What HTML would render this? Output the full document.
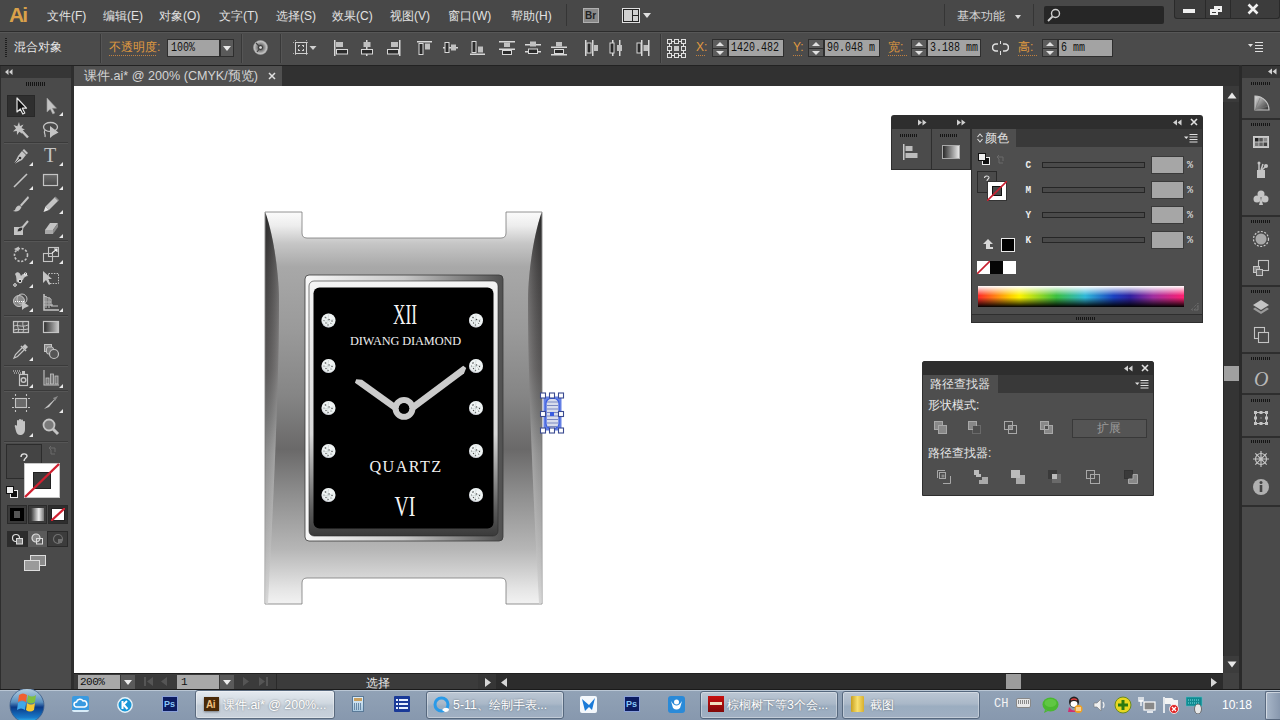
<!DOCTYPE html>
<html><head><meta charset="utf-8">
<style>
*{margin:0;padding:0;box-sizing:border-box}
html,body{width:1280px;height:720px;overflow:hidden;background:#474747;font-family:"Liberation Sans",sans-serif;font-size:12px;color:#d8d8d8}
.a{position:absolute}
.t{position:absolute;white-space:nowrap;line-height:1}
</style></head><body>
<!-- MENU BAR -->
<div class="a" id="menubar" style="left:0;top:0;width:1280px;height:31px;background:#484848"></div>
<div class="a" style="left:0;top:31px;width:1280px;height:1px;background:#2c2c2c"></div>

<!-- menubar content -->
<div class="t" style="left:9px;top:4px;font-size:21px;font-weight:bold;color:#d9a14a;letter-spacing:-1.8px">Ai</div>
<div class="t" style="left:47px;top:10px;color:#e2e2e2">文件(F)</div>
<div class="t" style="left:103px;top:10px;color:#e2e2e2">编辑(E)</div>
<div class="t" style="left:159px;top:10px;color:#e2e2e2">对象(O)</div>
<div class="t" style="left:219px;top:10px;color:#e2e2e2">文字(T)</div>
<div class="t" style="left:276px;top:10px;color:#e2e2e2">选择(S)</div>
<div class="t" style="left:332px;top:10px;color:#e2e2e2">效果(C)</div>
<div class="t" style="left:390px;top:10px;color:#e2e2e2">视图(V)</div>
<div class="t" style="left:448px;top:10px;color:#e2e2e2">窗口(W)</div>
<div class="t" style="left:511px;top:10px;color:#e2e2e2">帮助(H)</div>
<div class="a" style="left:566px;top:4px;width:1px;height:22px;background:#353535"></div>
<div class="a" style="left:583px;top:8px;width:16px;height:15px;background:#8a8a8a;border:1px solid #b0b0b0"></div>
<div class="t" style="left:585px;top:11px;font-size:10px;color:#222;font-weight:bold">Br</div>
<div class="a" style="left:622px;top:8px;width:18px;height:15px;border:1px solid #e0e0e0;background:#222"></div>
<div class="a" style="left:624px;top:10px;width:8px;height:11px;background:#cfcfcf"></div>
<div class="a" style="left:633px;top:10px;width:5px;height:5px;background:#cfcfcf"></div>
<div class="a" style="left:633px;top:16px;width:5px;height:5px;background:#cfcfcf"></div>
<div class="a" style="left:643px;top:13px;width:0;height:0;border-left:4px solid transparent;border-right:4px solid transparent;border-top:5px solid #e0e0e0"></div>
<div class="a" style="left:944px;top:4px;width:1px;height:22px;background:#353535"></div>
<div class="t" style="left:957px;top:10px;color:#d8d8d8">基本功能</div>
<div class="a" style="left:1015px;top:15px;width:0;height:0;border-left:3px solid transparent;border-right:3px solid transparent;border-top:4px solid #d8d8d8"></div>
<div class="a" style="left:1033px;top:4px;width:1px;height:22px;background:#353535"></div>
<div class="a" style="left:1044px;top:6px;width:120px;height:18px;background:#262626;border-radius:2px"></div>
<svg class="a" style="left:1046px;top:7px" width="16" height="16" viewBox="0 0 16 16"><circle cx="9.5" cy="6.5" r="4" fill="none" stroke="#cfcfcf" stroke-width="1.4"/><line x1="6.5" y1="9.5" x2="2" y2="14" stroke="#cfcfcf" stroke-width="1.8"/></svg>
<div class="a" style="left:1174px;top:0;width:106px;height:19px;background:#3c3c3c;border:1px solid #2a2a2a;border-top:none;border-radius:0 0 3px 3px"></div>
<div class="a" style="left:1205px;top:0;width:1px;height:19px;background:#2a2a2a"></div>
<div class="a" style="left:1230px;top:0;width:1px;height:19px;background:#2a2a2a"></div>
<div class="a" style="left:1183px;top:9px;width:12px;height:4px;background:#f0f0f0"></div>
<div class="a" style="left:1214px;top:6px;width:8px;height:6px;border:2px solid #f0f0f0;border-top-width:3px"></div>
<div class="a" style="left:1210px;top:9px;width:8px;height:6px;border:2px solid #f0f0f0;border-top-width:3px;background:#3c3c3c"></div>
<svg class="a" style="left:1247px;top:3px" width="12" height="12" viewBox="0 0 12 12"><path d="M1.5 1.5L10.5 10.5M10.5 1.5L1.5 10.5" stroke="#f0f0f0" stroke-width="2.6"/></svg>
<!-- CONTROL BAR -->
<div class="a" id="ctrl" style="left:0;top:32px;width:1280px;height:33px;background:#4b4b4b;border-top:1px solid #575757"></div>

<!-- control bar content -->
<div class="a" style="left:5px;top:38px;width:2px;height:20px;background:repeating-linear-gradient(#1e1e1e 0 1px,#4b4b4b 1px 2px)"></div>
<div class="t" style="left:14px;top:41px;color:#e8e8e8">混合对象</div>
<div class="a" style="left:100px;top:34px;width:1px;height:29px;background:#383838"></div><div class="a" style="left:101px;top:34px;width:1px;height:29px;background:#555"></div>
<div class="t" style="left:109px;top:41px;color:#e09a40">不透明度:</div>
<div class="a" style="left:109px;top:55px;width:48px;height:1px;background:repeating-linear-gradient(90deg,#c08040 0 1px,transparent 1px 2px)"></div>
<div class="a" style="left:167px;top:39px;width:53px;height:18px;background:#a3a3a3;border:1px solid #2e2e2e"></div>
<div class="t" style="left:171px;top:42px;color:#111;font-family:'Liberation Mono',monospace;font-size:10px;transform:scaleY(1.25);transform-origin:0 0">100%</div>
<div class="a" style="left:220px;top:39px;width:14px;height:18px;background:#5a5a5a;border:1px solid #2e2e2e"></div>
<div class="a" style="left:223px;top:46px;width:0;height:0;border-left:4px solid transparent;border-right:4px solid transparent;border-top:5px solid #e8e8e8"></div>
<div class="a" style="left:241px;top:34px;width:1px;height:29px;background:#383838"></div><div class="a" style="left:242px;top:34px;width:1px;height:29px;background:#555"></div>
<svg class="a" style="left:253px;top:40px" width="15" height="15" viewBox="0 0 15 15"><defs><radialGradient id="gl" cx="0.5" cy="0.5" r="0.5"><stop offset="0" stop-color="#e8e8e8"/><stop offset="0.25" stop-color="#303030"/><stop offset="0.45" stop-color="#7a7a7a"/><stop offset="1" stop-color="#d8d8d8"/></radialGradient></defs><circle cx="7.5" cy="7.5" r="7" fill="url(#gl)" stroke="#999" stroke-width="0.6"/><path d="M7.5 7.5L3 3M7.5 7.5L4 12" stroke="#444" stroke-width="1.2"/><circle cx="7.5" cy="7.5" r="1.3" fill="#ddd"/></svg>
<div class="a" style="left:280px;top:34px;width:1px;height:29px;background:#383838"></div><div class="a" style="left:281px;top:34px;width:1px;height:29px;background:#555"></div>
<svg class="a" style="left:292px;top:39px" width="26" height="18" viewBox="0 0 26 18"><rect x="3.5" y="3.5" width="11" height="11" fill="none" stroke="#d0d0d0"/><path d="M1 3.5H3M15 3.5H17M1 14.5H3M15 14.5H17M3.5 1V3M14.5 1V3M3.5 15V17M14.5 15V17" stroke="#aaa" stroke-width="1" stroke-dasharray="1 1"/><path d="M6 6.5h2M10 6.5h2M6 11.5h2M10 11.5h2M6.5 6v2M6.5 10v2M11.5 6v2M11.5 10v2" stroke="#d0d0d0"/><path d="M17.5 7h7l-3.5 4z" fill="#d0d0d0"/></svg>
<svg class="a" style="left:333px;top:40px" width="16" height="16" viewBox="0 0 16 16"><rect x="1" y="0" width="1.5" height="16" fill="#d8d8d8"/><rect x="3" y="2" width="7" height="5" fill="#c0c0c0"/><rect x="3.5" y="9.5" width="11" height="4.5" fill="#2a2a2a" stroke="#d8d8d8" stroke-width="1"/></svg>
<svg class="a" style="left:359px;top:40px" width="16" height="16" viewBox="0 0 16 16"><rect x="7" y="0" width="1.5" height="16" fill="#d8d8d8"/><rect x="4.5" y="2" width="7" height="5" fill="#c0c0c0"/><rect x="2.5" y="9.5" width="11" height="4.5" fill="#2a2a2a" stroke="#d8d8d8"/></svg>
<svg class="a" style="left:386px;top:40px" width="16" height="16" viewBox="0 0 16 16"><rect x="13" y="0" width="1.5" height="16" fill="#d8d8d8"/><rect x="5" y="2" width="7" height="5" fill="#c0c0c0"/><rect x="1.5" y="9.5" width="11" height="4.5" fill="#2a2a2a" stroke="#d8d8d8"/></svg>
<svg class="a" style="left:417px;top:40px" width="16" height="16" viewBox="0 0 16 16"><rect x="0" y="1" width="15" height="1.5" fill="#d8d8d8"/><rect x="2" y="3.5" width="4" height="11" fill="#2a2a2a" stroke="#d8d8d8"/><rect x="8" y="3.5" width="5" height="6" fill="#c0c0c0"/></svg>
<svg class="a" style="left:443px;top:40px" width="16" height="16" viewBox="0 0 16 16"><rect x="0" y="7" width="15" height="1.5" fill="#d8d8d8"/><rect x="2" y="2.5" width="4" height="10" fill="#2a2a2a" stroke="#d8d8d8"/><rect x="8" y="4.5" width="5" height="6" fill="#c0c0c0"/></svg>
<svg class="a" style="left:470px;top:40px" width="16" height="16" viewBox="0 0 16 16"><rect x="0" y="13.5" width="15" height="1.5" fill="#d8d8d8"/><rect x="2" y="1.5" width="4" height="11" fill="#2a2a2a" stroke="#d8d8d8"/><rect x="8" y="6.5" width="5" height="6" fill="#c0c0c0"/></svg>
<svg class="a" style="left:499px;top:40px" width="16" height="16" viewBox="0 0 16 16"><rect x="0" y="1" width="16" height="1.5" fill="#d8d8d8"/><rect x="0" y="8.5" width="16" height="1.5" fill="#d8d8d8"/><rect x="5" y="2.5" width="6" height="4.5" fill="#c0c0c0"/><rect x="3.5" y="10.5" width="9" height="4" fill="#2a2a2a" stroke="#d8d8d8"/></svg>
<svg class="a" style="left:525px;top:40px" width="16" height="16" viewBox="0 0 16 16"><rect x="0" y="4" width="16" height="1.5" fill="#d8d8d8"/><rect x="0" y="11" width="16" height="1.5" fill="#d8d8d8"/><rect x="5" y="1.5" width="6" height="5" fill="#c0c0c0"/><rect x="3.5" y="9" width="9" height="4.5" fill="#2a2a2a" stroke="#d8d8d8"/></svg>
<svg class="a" style="left:551px;top:40px" width="16" height="16" viewBox="0 0 16 16"><rect x="0" y="6.5" width="16" height="1.5" fill="#d8d8d8"/><rect x="0" y="14" width="16" height="1.5" fill="#d8d8d8"/><rect x="5" y="2" width="6" height="4.5" fill="#c0c0c0"/><rect x="3.5" y="9.5" width="9" height="4" fill="#2a2a2a" stroke="#d8d8d8"/></svg>
<svg class="a" style="left:584px;top:40px" width="16" height="16" viewBox="0 0 16 16"><rect x="1" y="0" width="1.5" height="16" fill="#d8d8d8"/><rect x="8" y="0" width="1.5" height="16" fill="#d8d8d8"/><rect x="3" y="3" width="4" height="10" fill="#2a2a2a" stroke="#d8d8d8"/><rect x="10" y="5" width="4" height="6" fill="#c0c0c0"/></svg>
<svg class="a" style="left:609px;top:40px" width="16" height="16" viewBox="0 0 16 16"><rect x="3" y="0" width="1.5" height="16" fill="#d8d8d8"/><rect x="10" y="0" width="1.5" height="16" fill="#d8d8d8"/><rect x="1" y="3" width="4" height="10" fill="#2a2a2a" stroke="#d8d8d8"/><rect x="8" y="5" width="5" height="6" fill="#c0c0c0"/></svg>
<svg class="a" style="left:635px;top:40px" width="16" height="16" viewBox="0 0 16 16"><rect x="6" y="0" width="1.5" height="16" fill="#d8d8d8"/><rect x="13" y="0" width="1.5" height="16" fill="#d8d8d8"/><rect x="2" y="3" width="4" height="10" fill="#2a2a2a" stroke="#d8d8d8"/><rect x="8.5" y="5" width="4.5" height="6" fill="#c0c0c0"/></svg>

<div class="a" style="left:660px;top:34px;width:1px;height:29px;background:#383838"></div><div class="a" style="left:661px;top:34px;width:1px;height:29px;background:#555"></div>
<svg class="a" style="left:667px;top:39px" width="19" height="19" viewBox="0 0 19 19" fill="none" stroke="#e0e0e0" stroke-width="1"><rect x="0.5" y="0.5" width="4" height="4"/><rect x="7.5" y="0.5" width="4" height="4"/><rect x="14.5" y="0.5" width="4" height="4"/><rect x="0.5" y="7.5" width="4" height="4"/><rect x="7" y="7" width="5" height="5" fill="#c8c8c8" stroke="none"/><rect x="14.5" y="7.5" width="4" height="4"/><rect x="0.5" y="14.5" width="4" height="4"/><rect x="7.5" y="14.5" width="4" height="4"/><rect x="14.5" y="14.5" width="4" height="4"/><path d="M4.5 2.5h3M11.5 2.5h3M4.5 16.5h3M11.5 16.5h3M2.5 4.5v3M2.5 11.5v3M16.5 4.5v3M16.5 11.5v3"/></svg>
<div class="t" style="left:696px;top:41px;color:#e09a40;font-size:12px">X:</div>
<div class="a" style="left:696px;top:55px;width:10px;height:1px;background:repeating-linear-gradient(90deg,#c08040 0 1px,transparent 1px 2px)"></div>
<div class="a" style="left:712px;top:39px;width:16px;height:18px;background:#5c5c5c;border:1px solid #2e2e2e"></div>
<div class="a" style="left:716px;top:42px;width:0;height:0;border-left:4px solid transparent;border-right:4px solid transparent;border-bottom:4px solid #e0e0e0"></div>
<div class="a" style="left:713px;top:48px;width:14px;height:1px;background:#2e2e2e"></div>
<div class="a" style="left:716px;top:51px;width:0;height:0;border-left:4px solid transparent;border-right:4px solid transparent;border-top:4px solid #e0e0e0"></div>
<div class="a" style="left:728px;top:39px;width:56px;height:18px;background:#a3a3a3;border:1px solid #2e2e2e;overflow:hidden"></div>
<div class="t" style="left:731px;top:42px;color:#111;font-family:'Liberation Mono',monospace;font-size:10px;transform:scaleY(1.25);transform-origin:0 0">1420.482</div>
<div class="t" style="left:793px;top:41px;color:#e09a40;font-size:12px">Y:</div>
<div class="a" style="left:793px;top:55px;width:10px;height:1px;background:repeating-linear-gradient(90deg,#c08040 0 1px,transparent 1px 2px)"></div>
<div class="a" style="left:808px;top:39px;width:16px;height:18px;background:#5c5c5c;border:1px solid #2e2e2e"></div>
<div class="a" style="left:812px;top:42px;width:0;height:0;border-left:4px solid transparent;border-right:4px solid transparent;border-bottom:4px solid #e0e0e0"></div>
<div class="a" style="left:809px;top:48px;width:14px;height:1px;background:#2e2e2e"></div>
<div class="a" style="left:812px;top:51px;width:0;height:0;border-left:4px solid transparent;border-right:4px solid transparent;border-top:4px solid #e0e0e0"></div>
<div class="a" style="left:824px;top:39px;width:56px;height:18px;background:#a3a3a3;border:1px solid #2e2e2e;overflow:hidden"></div>
<div class="t" style="left:827px;top:42px;color:#111;font-family:'Liberation Mono',monospace;font-size:10px;transform:scaleY(1.25);transform-origin:0 0">90.048 m</div>
<div class="t" style="left:888px;top:41px;color:#e09a40;font-size:12px">宽:</div>
<div class="a" style="left:888px;top:55px;width:20px;height:1px;background:repeating-linear-gradient(90deg,#c08040 0 1px,transparent 1px 2px)"></div>
<div class="a" style="left:911px;top:39px;width:16px;height:18px;background:#5c5c5c;border:1px solid #2e2e2e"></div>
<div class="a" style="left:915px;top:42px;width:0;height:0;border-left:4px solid transparent;border-right:4px solid transparent;border-bottom:4px solid #e0e0e0"></div>
<div class="a" style="left:912px;top:48px;width:14px;height:1px;background:#2e2e2e"></div>
<div class="a" style="left:915px;top:51px;width:0;height:0;border-left:4px solid transparent;border-right:4px solid transparent;border-top:4px solid #e0e0e0"></div>
<div class="a" style="left:927px;top:39px;width:54px;height:18px;background:#a3a3a3;border:1px solid #2e2e2e;overflow:hidden"></div>
<div class="t" style="left:930px;top:42px;color:#111;font-family:'Liberation Mono',monospace;font-size:10px;transform:scaleY(1.25);transform-origin:0 0">3.188 mm</div>
<svg class="a" style="left:992px;top:41px" width="17" height="14" viewBox="0 0 17 14" fill="none" stroke="#e0e0e0" stroke-width="1.6"><path d="M6 3H4a3.5 3.5 0 0 0 0 7h2M11 3h2a3.5 3.5 0 0 1 0 7h-2"/><path d="M8.5 0v3M8.5 10v4" stroke-width="1"/></svg>
<div class="t" style="left:1018px;top:41px;color:#e09a40;font-size:12px">高:</div>
<div class="a" style="left:1018px;top:55px;width:20px;height:1px;background:repeating-linear-gradient(90deg,#c08040 0 1px,transparent 1px 2px)"></div>
<div class="a" style="left:1042px;top:39px;width:16px;height:18px;background:#5c5c5c;border:1px solid #2e2e2e"></div>
<div class="a" style="left:1046px;top:42px;width:0;height:0;border-left:4px solid transparent;border-right:4px solid transparent;border-bottom:4px solid #e0e0e0"></div>
<div class="a" style="left:1043px;top:48px;width:14px;height:1px;background:#2e2e2e"></div>
<div class="a" style="left:1046px;top:51px;width:0;height:0;border-left:4px solid transparent;border-right:4px solid transparent;border-top:4px solid #e0e0e0"></div>
<div class="a" style="left:1058px;top:39px;width:55px;height:18px;background:#a3a3a3;border:1px solid #2e2e2e;overflow:hidden"></div>
<div class="t" style="left:1061px;top:42px;color:#111;font-family:'Liberation Mono',monospace;font-size:10px;transform:scaleY(1.25);transform-origin:0 0">6 mm</div>
<svg class="a" style="left:1248px;top:41px" width="16" height="12" viewBox="0 0 16 12"><path d="M0 3h5l-2.5 3z" fill="#e0e0e0"/><path d="M7 1.5h8M7 4.5h8M7 7.5h8M7 10.5h8" stroke="#e0e0e0" stroke-width="1.2"/></svg>
<!-- TAB BAR -->
<div class="a" style="left:72px;top:65px;width:1170px;height:21px;background:#313131"></div>
<div class="a" style="left:74px;top:66px;width:208px;height:20px;background:#505050"></div>
<!-- LEFT TOOLBAR -->
<div class="a" style="left:0;top:65px;width:74px;height:625px;background:#2e2e2e"></div>
<div class="a" style="left:1px;top:66px;width:70px;height:12px;background:#363636"></div>
<div class="a" style="left:1px;top:78px;width:70px;height:611px;background:#4a4a4a"></div>
<!-- CANVAS -->
<div class="a" style="left:74px;top:86px;width:1149px;height:587px;background:#ffffff"></div>
<!-- V SCROLL -->
<div class="a" style="left:1223px;top:86px;width:17px;height:587px;background:#343434;border-left:1px solid #262626"></div>
<!-- RIGHT DOCK -->
<div class="a" style="left:1240px;top:65px;width:2px;height:625px;background:#2a2a2a"></div>
<div class="a" style="left:1242px;top:66px;width:38px;height:12px;background:#363636"></div>
<div class="a" style="left:1242px;top:78px;width:38px;height:612px;background:#4a4a4a"></div>

<div class="t" style="left:84px;top:70px;color:#d4d4d4;font-size:12.6px">课件.ai* @ 200% (CMYK/预览)</div>
<svg class="a" style="left:268px;top:72px" width="8" height="8" viewBox="0 0 8 8"><path d="M1 1L7 7M7 1L1 7" stroke="#e0e0e0" stroke-width="1.5"/></svg>
<svg class="a" style="left:5px;top:69px" width="8" height="6" viewBox="0 0 8 6"><path d="M3.5 0L0 3L3.5 6ZM7.5 0L4 3L7.5 6Z" fill="#d0d0d0"/></svg>
<svg class="a" style="left:1268px;top:68px" width="9" height="7" viewBox="0 0 9 7"><path d="M4 0.5L0 3.5L4 6.5ZM8.5 0.5L4.5 3.5L8.5 6.5Z" fill="#d0d0d0"/></svg>
<div class="a" style="left:26px;top:82px;width:20px;height:4px;background:repeating-linear-gradient(90deg,#151515 0 1px,transparent 1px 2px)"></div>
<div class="a" style="left:0;top:65px;width:1280px;height:1px;background:#222"></div>
<!-- STATUS BAR -->
<div class="a" style="left:74px;top:673px;width:1149px;height:17px;background:#2c2c2c"></div>
<!-- TASKBAR -->
<div class="a" style="left:0;top:690px;width:1280px;height:30px;background:#8596ad"></div>
<!-- TOOLS -->
<div class="a" style="left:7px;top:95px;width:28px;height:22px;background:#2f2f2f;border:1px solid #282828"></div>
<div class="a" style="left:4px;top:142px;width:64px;height:1px;background:#3a3a3a"></div>
<div class="a" style="left:4px;top:143px;width:64px;height:1px;background:#565656"></div>
<div class="a" style="left:4px;top:240px;width:64px;height:1px;background:#3a3a3a"></div>
<div class="a" style="left:4px;top:241px;width:64px;height:1px;background:#565656"></div>
<div class="a" style="left:4px;top:315px;width:64px;height:1px;background:#3a3a3a"></div>
<div class="a" style="left:4px;top:316px;width:64px;height:1px;background:#565656"></div>
<div class="a" style="left:4px;top:365px;width:64px;height:1px;background:#3a3a3a"></div>
<div class="a" style="left:4px;top:366px;width:64px;height:1px;background:#565656"></div>
<div class="a" style="left:4px;top:390px;width:64px;height:1px;background:#3a3a3a"></div>
<div class="a" style="left:4px;top:391px;width:64px;height:1px;background:#565656"></div>
<div class="a" style="left:4px;top:441px;width:64px;height:1px;background:#3a3a3a"></div>
<div class="a" style="left:4px;top:442px;width:64px;height:1px;background:#565656"></div>
<svg class="a" style="left:11px;top:96px" width="20" height="20" viewBox="0 0 20 20"><path d="M6 2V16L9.3 13L11.8 18L13.8 17L11.3 12.2H15.5Z" fill="#111" stroke="#e6e6e6" stroke-width="1.2" stroke-linejoin="round"/></svg>
<svg class="a" style="left:41px;top:96px" width="20" height="20" viewBox="0 0 20 20"><path d="M6 2V16L9.3 13L11.8 18L13.8 17L11.3 12.2H15.5Z" fill="#c4c4c4" stroke="#9a9a9a" stroke-width="0.6"/></svg>
<svg class="a" style="left:59px;top:112px" width="4" height="4" viewBox="0 0 4 4"><path d="M4 0V4H0z" fill="#e8e8e8"/></svg>
<svg class="a" style="left:11px;top:120px" width="20" height="20" viewBox="0 0 20 20"><path d="M8 2L9 6L12.5 4.5L10.5 8L14 9.5L10.3 10.5L11.5 14L8.3 11.7L6 15L5.8 11L2 11.5L5 8.5L2.5 5L6.3 6.2Z" fill="#c4c4c4"/><path d="M10 10L17 17.5" stroke="#c4c4c4" stroke-width="2.4"/></svg>
<svg class="a" style="left:41px;top:120px" width="20" height="20" viewBox="0 0 20 20"><ellipse cx="9.5" cy="7" rx="7" ry="4.5" fill="none" stroke="#c4c4c4" stroke-width="1.3"/><path d="M4 10C2 13 5 14 4 17" fill="none" stroke="#c4c4c4" stroke-width="1.2"/><path d="M9 6V18L12 15.5L17.5 12.5Z" fill="#c4c4c4"/></svg>
<svg class="a" style="left:11px;top:146px" width="20" height="20" viewBox="0 0 20 20"><path d="M13 3L17 7L15.5 8.5L11.5 4.5Z" fill="#c4c4c4"/><path d="M11 5L15 9L11 14L3 18L7 10Z" fill="#c4c4c4"/><circle cx="9" cy="12" r="1.3" fill="#333"/><path d="M3 18L9 12" stroke="#333" stroke-width="0.8"/></svg>
<svg class="a" style="left:29px;top:162px" width="4" height="4" viewBox="0 0 4 4"><path d="M4 0V4H0z" fill="#e8e8e8"/></svg>
<div class="t" style="left:44px;top:145px;font-family:'Liberation Serif',serif;font-size:20px;color:#c4c4c4">T</div>
<svg class="a" style="left:59px;top:162px" width="4" height="4" viewBox="0 0 4 4"><path d="M4 0V4H0z" fill="#e8e8e8"/></svg>
<svg class="a" style="left:11px;top:170px" width="20" height="20" viewBox="0 0 20 20"><path d="M3 17L16 4" stroke="#c4c4c4" stroke-width="1.6"/></svg>
<svg class="a" style="left:29px;top:186px" width="4" height="4" viewBox="0 0 4 4"><path d="M4 0V4H0z" fill="#e8e8e8"/></svg>
<svg class="a" style="left:41px;top:170px" width="20" height="20" viewBox="0 0 20 20"><defs><linearGradient id="rg" x1="0" y1="0" x2="0" y2="1"><stop offset="0" stop-color="#6a6a6a"/><stop offset="1" stop-color="#4a4a4a"/></linearGradient></defs><rect x="2.5" y="4.5" width="14" height="11" fill="url(#rg)" stroke="#c4c4c4" stroke-width="1.2"/></svg>
<svg class="a" style="left:59px;top:186px" width="4" height="4" viewBox="0 0 4 4"><path d="M4 0V4H0z" fill="#e8e8e8"/></svg>
<svg class="a" style="left:11px;top:194px" width="20" height="20" viewBox="0 0 20 20"><path d="M17 2L9 11L10.5 12.5L18 4Z" fill="#c4c4c4"/><path d="M8.5 11.5C6 11.5 5 13 4 16L2 17C5 18 9 17.5 10.5 13Z" fill="#c4c4c4"/></svg>
<svg class="a" style="left:41px;top:194px" width="20" height="20" viewBox="0 0 20 20"><path d="M14 3L17.5 6.5L8 16L4.5 12.5Z" fill="#c4c4c4"/><path d="M4.5 12.5L8 16L2.5 18Z" fill="#e8e8e8"/><path d="M14 3L17.5 6.5" stroke="#888" stroke-width="1.5"/></svg>
<svg class="a" style="left:59px;top:210px" width="4" height="4" viewBox="0 0 4 4"><path d="M4 0V4H0z" fill="#e8e8e8"/></svg>
<svg class="a" style="left:11px;top:218px" width="20" height="20" viewBox="0 0 20 20"><path d="M3 9H9L9 12H12V17H3Z" fill="#c4c4c4"/><path d="M17 3L11 10" stroke="#c4c4c4" stroke-width="2"/><path d="M11 9C8 9 6 11 6 14C9 14 11 13 12 11Z" fill="#333" stroke="#c4c4c4" stroke-width="1"/></svg>
<svg class="a" style="left:41px;top:218px" width="20" height="20" viewBox="0 0 20 20"><path d="M9 5H17L12 12H4Z" fill="#c4c4c4"/><path d="M4 12H12V16H4Z" fill="#a8a8a8"/><path d="M12 12L17 5V9L12 16Z" fill="#8a8a8a"/></svg>
<svg class="a" style="left:59px;top:234px" width="4" height="4" viewBox="0 0 4 4"><path d="M4 0V4H0z" fill="#e8e8e8"/></svg>
<svg class="a" style="left:11px;top:244px" width="20" height="20" viewBox="0 0 20 20"><circle cx="10" cy="11" r="6.5" fill="none" stroke="#c4c4c4" stroke-width="1.6" stroke-dasharray="2.2 1.6"/><path d="M3 5L8 2.5L7.5 7.5Z" fill="#c4c4c4"/></svg>
<svg class="a" style="left:29px;top:260px" width="4" height="4" viewBox="0 0 4 4"><path d="M4 0V4H0z" fill="#e8e8e8"/></svg>
<svg class="a" style="left:41px;top:244px" width="20" height="20" viewBox="0 0 20 20"><rect x="2.5" y="9.5" width="9" height="8" fill="none" stroke="#c4c4c4" stroke-width="1.1"/><rect x="7.5" y="3.5" width="10" height="9" fill="none" stroke="#c4c4c4" stroke-width="1.1"/><path d="M11 9L16 5M13 5H16V8" fill="none" stroke="#eee" stroke-width="1.1"/></svg>
<svg class="a" style="left:59px;top:260px" width="4" height="4" viewBox="0 0 4 4"><path d="M4 0V4H0z" fill="#e8e8e8"/></svg>
<svg class="a" style="left:11px;top:268px" width="20" height="20" viewBox="0 0 20 20"><path d="M4 6C6 3 9 4 10 8C12 5 15 5 17 8C15 8 13 9 12 12C10 13 7 12 6 15C5 12 6 9 4 6Z" fill="#c4c4c4"/><circle cx="9" cy="13" r="1.8" fill="#333" stroke="#eee" stroke-width="1"/><circle cx="4" cy="17" r="1.3" fill="none" stroke="#eee" stroke-width="1"/><circle cx="14.5" cy="6" r="1.2" fill="none" stroke="#eee" stroke-width="1"/></svg>
<svg class="a" style="left:29px;top:284px" width="4" height="4" viewBox="0 0 4 4"><path d="M4 0V4H0z" fill="#e8e8e8"/></svg>
<svg class="a" style="left:41px;top:268px" width="20" height="20" viewBox="0 0 20 20"><rect x="7.5" y="5.5" width="10" height="10" fill="none" stroke="#c4c4c4" stroke-dasharray="1.5 1.2"/><path d="M2 3V15L5 12L8 17L9.5 16L7 11H11Z" fill="#c4c4c4"/></svg>
<svg class="a" style="left:11px;top:292px" width="20" height="20" viewBox="0 0 20 20"><circle cx="8" cy="9" r="5.5" fill="#8a8a8a" stroke="#c4c4c4" stroke-width="1"/><circle cx="11" cy="7" r="5" fill="none" stroke="#c4c4c4" stroke-width="1"/><path d="M4 9.5H14" stroke="#fff" stroke-width="1.2" stroke-dasharray="1 1"/><path d="M11 9V18L13.5 16L18 14Z" fill="#c4c4c4"/></svg>
<svg class="a" style="left:29px;top:308px" width="4" height="4" viewBox="0 0 4 4"><path d="M4 0V4H0z" fill="#e8e8e8"/></svg>
<svg class="a" style="left:41px;top:292px" width="20" height="20" viewBox="0 0 20 20"><path d="M3 2V18H18" fill="none" stroke="#c4c4c4" stroke-width="1.5"/><path d="M3 4L10 7V14H17" fill="none" stroke="#c4c4c4"/><path d="M5 4V16M8 5V16M3 10H10M3 13H12" stroke="#c4c4c4" stroke-width="1"/><rect x="4" y="5" width="5" height="9" fill="#9a9a9a" opacity="0.6"/></svg>
<svg class="a" style="left:59px;top:308px" width="4" height="4" viewBox="0 0 4 4"><path d="M4 0V4H0z" fill="#e8e8e8"/></svg>
<svg class="a" style="left:11px;top:317px" width="20" height="20" viewBox="0 0 20 20"><rect x="2.5" y="4.5" width="15" height="11" fill="#555" stroke="#c4c4c4" stroke-width="1.2"/><path d="M3 9C7 7 10 11 17 8M3 13C8 11 11 14 17 12M7 5C5 9 9 12 7 15M12 5C11 9 14 11 12 15" fill="none" stroke="#c4c4c4" stroke-width="1"/></svg>
<svg class="a" style="left:41px;top:317px" width="20" height="20" viewBox="0 0 20 20"><defs><linearGradient id="gg" x1="0" x2="1"><stop offset="0" stop-color="#2a2a2a"/><stop offset="1" stop-color="#c8c8c8"/></linearGradient></defs><rect x="2.5" y="4.5" width="15" height="11" fill="url(#gg)" stroke="#c4c4c4" stroke-width="1.2"/></svg>
<svg class="a" style="left:11px;top:341px" width="20" height="20" viewBox="0 0 20 20"><path d="M14 3L17 6L14.5 8.5L11.5 5.5Z" fill="#c4c4c4"/><path d="M10 5L15 10" stroke="#c4c4c4" stroke-width="1.6"/><path d="M11 7L4.5 13.5L3 17L6.5 15.5L13 9" fill="none" stroke="#c4c4c4" stroke-width="1.2"/></svg>
<svg class="a" style="left:29px;top:357px" width="4" height="4" viewBox="0 0 4 4"><path d="M4 0V4H0z" fill="#e8e8e8"/></svg>
<svg class="a" style="left:41px;top:341px" width="20" height="20" viewBox="0 0 20 20"><rect x="3.5" y="3.5" width="7" height="7" fill="#8a8a8a" stroke="#c4c4c4"/><rect x="5.5" y="6" width="7" height="7" rx="2" fill="#7a7a7a" stroke="#c4c4c4"/><circle cx="13" cy="13" r="4.5" fill="#555" stroke="#c4c4c4" stroke-width="1.2"/></svg>
<svg class="a" style="left:11px;top:368px" width="20" height="20" viewBox="0 0 20 20"><path d="M2 3h1M4 3h1M6 3h1M8 3h1M3 5h1M5 5h1M7 5h1M9 5h1" stroke="#ddd" stroke-width="1.2"/><rect x="11" y="3" width="3" height="3" fill="#c4c4c4"/><rect x="8.5" y="6.5" width="8" height="11" fill="#4a4a4a" stroke="#c4c4c4" stroke-width="1.2"/><circle cx="12.5" cy="12" r="2.3" fill="none" stroke="#c4c4c4" stroke-width="1.5"/></svg>
<svg class="a" style="left:29px;top:384px" width="4" height="4" viewBox="0 0 4 4"><path d="M4 0V4H0z" fill="#e8e8e8"/></svg>
<svg class="a" style="left:41px;top:368px" width="20" height="20" viewBox="0 0 20 20"><path d="M3 2V17H18" fill="none" stroke="#c4c4c4" stroke-width="1.1"/><rect x="5" y="10" width="3" height="6" fill="#777" stroke="#c4c4c4" stroke-width="0.8"/><rect x="9.5" y="6" width="3" height="10" fill="#777" stroke="#c4c4c4" stroke-width="0.8"/><rect x="14" y="8" width="3" height="8" fill="#777" stroke="#c4c4c4" stroke-width="0.8"/></svg>
<svg class="a" style="left:59px;top:384px" width="4" height="4" viewBox="0 0 4 4"><path d="M4 0V4H0z" fill="#e8e8e8"/></svg>
<svg class="a" style="left:11px;top:393px" width="20" height="20" viewBox="0 0 20 20"><rect x="4.5" y="5.5" width="11" height="9" fill="#6a6a6a" stroke="#c4c4c4" stroke-width="1.1"/><path d="M1 5.5H3M17 5.5H19M1 14.5H3M17 14.5H19M4.5 1V3M15.5 1V3M4.5 17V19M15.5 17V19" stroke="#c4c4c4" stroke-width="1.1"/></svg>
<svg class="a" style="left:41px;top:393px" width="20" height="20" viewBox="0 0 20 20"><path d="M17 3L3 16L8 14Z" fill="#c4c4c4"/><path d="M17 3L12 5L14 8Z" fill="#8a8a8a"/></svg>
<svg class="a" style="left:59px;top:409px" width="4" height="4" viewBox="0 0 4 4"><path d="M4 0V4H0z" fill="#e8e8e8"/></svg>
<svg class="a" style="left:11px;top:417px" width="20" height="20" viewBox="0 0 20 20"><path d="M4 10C3 8 5 7 6 9V4C6 2.5 8 2.5 8 4V8V3C8 1.5 10 1.5 10 3V8V3.5C10 2 12 2 12 3.5V8.5V5C12 3.7 14 3.7 14 5V12C14 16 12 18 9 18C6 18 5 15 4 10Z" fill="#c4c4c4"/></svg>
<svg class="a" style="left:29px;top:433px" width="4" height="4" viewBox="0 0 4 4"><path d="M4 0V4H0z" fill="#e8e8e8"/></svg>
<svg class="a" style="left:41px;top:417px" width="20" height="20" viewBox="0 0 20 20"><circle cx="8" cy="8" r="5.5" fill="#7a7a7a" stroke="#c4c4c4" stroke-width="1.8"/><path d="M12 12L17 17" stroke="#c4c4c4" stroke-width="3"/></svg>
<div class="a" style="left:6px;top:444px;width:36px;height:35px;background:#444;border:1px solid #2c2c2c"></div>
<svg class="a" style="left:19px;top:453px" width="10" height="12" viewBox="0 0 10 12"><path d="M2 4C2 0 8 0 8 3C8 5 5 5 5 8" fill="none" stroke="#e0e0e0" stroke-width="1.4"/></svg>
<svg class="a" style="left:47px;top:445px" width="12" height="12" viewBox="0 0 12 12"><path d="M2 3H8V7M2 3L4 1M2 3L4 5M8 9H4V5" fill="none" stroke="#6a6a6a" stroke-width="1"/></svg>
<div class="a" style="left:24px;top:463px;width:36px;height:35px;background:#fff;border:1px solid #c8c8c8"></div>
<div class="a" style="left:33px;top:472px;width:18px;height:17px;background:#3a3a3a;border:1px solid #222"></div>
<svg class="a" style="left:24px;top:463px" width="36" height="35" viewBox="0 0 36 35"><path d="M1 34L35 1" stroke="#d02030" stroke-width="2.4"/></svg>
<svg class="a" style="left:6px;top:486px" width="12" height="12" viewBox="0 0 12 12"><rect x="4.5" y="4.5" width="7" height="7" fill="#111" stroke="#eee"/><rect x="0.5" y="0.5" width="7" height="7" fill="#eee" stroke="#111"/></svg>
<div class="a" style="left:7px;top:505px;width:20px;height:19px;background:#3a3a3a;border:1px solid #2a2a2a"></div>
<div class="a" style="left:10px;top:508px;width:14px;height:13px;background:#000"></div>
<div class="a" style="left:14px;top:511px;width:6px;height:7px;background:#555"></div>
<div class="a" style="left:28px;top:505px;width:19px;height:19px;background:#3a3a3a;border:1px solid #2a2a2a"></div>
<div class="a" style="left:31px;top:508px;width:13px;height:13px;background:linear-gradient(90deg,#3a3a3a,#eee 60%,#777)"></div>
<div class="a" style="left:48px;top:505px;width:20px;height:19px;background:#2e2e2e;border:1px solid #2a2a2a"></div>
<svg class="a" style="left:51px;top:508px" width="14" height="13" viewBox="0 0 14 13"><rect x="0.5" y="0.5" width="13" height="12" fill="#fff" stroke="#222"/><path d="M0 13L14 0" stroke="#d02030" stroke-width="2.2"/></svg>
<div class="a" style="left:7px;top:531px;width:61px;height:16px;background:#3c3c3c;border:1px solid #2a2a2a"></div>
<div class="a" style="left:7px;top:531px;width:20px;height:16px;background:#2c2c2c"></div>
<div class="a" style="left:27px;top:531px;width:21px;height:16px;background:#5a5a5a;border-left:1px solid #2a2a2a;border-right:1px solid #2a2a2a"></div>
<svg class="a" style="left:11px;top:533px" width="13" height="12" viewBox="0 0 13 12"><circle cx="5" cy="5" r="3.5" fill="none" stroke="#ddd" stroke-width="1.2"/><rect x="5.5" y="5.5" width="6" height="5.5" fill="#888" stroke="#ddd"/></svg>
<svg class="a" style="left:31px;top:533px" width="13" height="12" viewBox="0 0 13 12"><circle cx="5" cy="5" r="4" fill="#888" stroke="#ddd" stroke-width="1.2"/><rect x="5.5" y="5.5" width="6" height="5.5" fill="none" stroke="#ddd"/></svg>
<svg class="a" style="left:52px;top:533px" width="13" height="12" viewBox="0 0 13 12"><circle cx="6" cy="6" r="4.5" fill="none" stroke="#707070" stroke-width="1.2"/><rect x="6" y="6" width="4" height="4" fill="#707070"/></svg>
<svg class="a" style="left:23px;top:555px" width="24" height="17" viewBox="0 0 24 17"><rect x="7.5" y="0.5" width="15" height="10" fill="#8a8a8a" stroke="#ddd"/><rect x="1.5" y="5.5" width="15" height="10" fill="#9a9a9a" stroke="#ddd"/></svg>

<!-- WATCH -->
<svg class="a" style="left:0;top:0" width="1280" height="720" viewBox="0 0 1280 720">
<defs>
<linearGradient id="cg" x1="0" y1="212" x2="0" y2="604" gradientUnits="userSpaceOnUse">
<stop offset="0" stop-color="#fbfbfb"/>
<stop offset="0.035" stop-color="#ededed"/>
<stop offset="0.08" stop-color="#c6c6c6"/>
<stop offset="0.14" stop-color="#a8a8a8"/>
<stop offset="0.3" stop-color="#9a9a9a"/>
<stop offset="0.47" stop-color="#858585"/>
<stop offset="0.605" stop-color="#6a6969"/>
<stop offset="0.72" stop-color="#8e8e8e"/>
<stop offset="0.86" stop-color="#b6b6b6"/>
<stop offset="0.96" stop-color="#e4e4e4"/>
<stop offset="1" stop-color="#f2f2f2"/>
</linearGradient>
<linearGradient id="crl" x1="0" y1="212" x2="0" y2="604" gradientUnits="userSpaceOnUse">
<stop offset="0" stop-color="#2e2e2e"/>
<stop offset="0.15" stop-color="#4a4848"/>
<stop offset="0.4" stop-color="#646262"/>
<stop offset="0.52" stop-color="#808080"/>
<stop offset="0.62" stop-color="#a0a0a0"/>
<stop offset="0.85" stop-color="#cccccc"/>
<stop offset="1" stop-color="#f4f4f4"/>
</linearGradient>
<linearGradient id="bz1" x1="305" y1="0" x2="503" y2="0" gradientUnits="userSpaceOnUse">
<stop offset="0" stop-color="#f8f8f8"/>
<stop offset="0.5" stop-color="#c8c8c8"/>
<stop offset="1" stop-color="#505050"/>
</linearGradient>
<linearGradient id="bz2" x1="0" y1="275" x2="0" y2="541" gradientUnits="userSpaceOnUse">
<stop offset="0" stop-color="#5a5a5a"/>
<stop offset="0.5" stop-color="#8a8a8a"/>
<stop offset="1" stop-color="#f0f0f0"/>
</linearGradient>
<linearGradient id="bz3" x1="0" y1="281" x2="0" y2="536" gradientUnits="userSpaceOnUse">
<stop offset="0" stop-color="#f4f4f4"/>
<stop offset="0.6" stop-color="#d8d8d8"/>
<stop offset="0.9" stop-color="#5a5a5a"/>
<stop offset="1" stop-color="#3a3a3a"/>
</linearGradient>
<linearGradient id="chl" x1="265" y1="0" x2="280" y2="0" gradientUnits="userSpaceOnUse"><stop offset="0" stop-color="#000" stop-opacity="0.12"/><stop offset="1" stop-color="#fff" stop-opacity="0.22"/></linearGradient>
<linearGradient id="chr" x1="542" y1="0" x2="527" y2="0" gradientUnits="userSpaceOnUse"><stop offset="0" stop-color="#000" stop-opacity="0.12"/><stop offset="1" stop-color="#fff" stop-opacity="0.22"/></linearGradient>
<radialGradient id="dg" cx="0.55" cy="0.4" r="0.6"><stop offset="0" stop-color="#ffffff" stop-opacity="0.9"/><stop offset="0.75" stop-color="#e0e8e8" stop-opacity="0.2"/><stop offset="1" stop-color="#99a" stop-opacity="0.5"/></radialGradient>
</defs>
<path d="M265 212H302V233Q302 238 307 238H501Q506 238 506 233V212H542V604H506V583Q506 578 501 578H307Q302 578 302 583V604H265Z" fill="url(#cg)" stroke="#7a7a7a" stroke-width="0.8"/>
<path d="M265.4 212.5C275 240 279 280 279 300C279 380 274 490 268 603.5H265.4Z" fill="url(#crl)"/>
<path d="M541.6 212.5C532 240 528 280 528 300C528 380 533 490 539 603.5H541.6Z" fill="url(#crl)"/>
<path d="M265.4 212.5C275 240 279 280 279 300C279 380 274 490 268 603.5H265.4Z" fill="url(#chl)"/>
<path d="M541.6 212.5C532 240 528 280 528 300C528 380 533 490 539 603.5H541.6Z" fill="url(#chr)"/>
<rect x="305" y="275" width="198" height="266" rx="4" fill="url(#bz1)" stroke="#3a3a3a" stroke-width="0.8"/>
<rect x="309" y="281" width="189" height="255" rx="5" fill="url(#bz3)" stroke="#2a2a2a" stroke-width="0.6"/>
<rect x="313.5" y="287.5" width="180" height="241" rx="6" fill="#000"/>
<g transform="translate(328.5 320.5)"><circle r="7" fill="#f2f6f6"/><circle r="7" fill="url(#dg)"/><circle cx="-3" cy="-3" r="0.8" fill="#333"/><circle cx="0.5" cy="-1" r="0.8" fill="#444"/><circle cx="3.5" cy="0.5" r="0.7" fill="#444"/><circle cx="-2.5" cy="2.5" r="0.7" fill="#555"/><circle cx="-0.5" cy="4.5" r="0.7" fill="#444"/><circle cx="2.5" cy="3" r="0.6" fill="#666"/><circle cx="-4.5" cy="0" r="0.6" fill="#555"/><path d="M-4 -4L4 4M-5 1L5 -1M0 -6L-1 6" stroke="#b8c4c4" stroke-width="0.5"/></g><g transform="translate(328.5 366)"><circle r="7" fill="#f2f6f6"/><circle r="7" fill="url(#dg)"/><circle cx="-3" cy="-3" r="0.8" fill="#333"/><circle cx="0.5" cy="-1" r="0.8" fill="#444"/><circle cx="3.5" cy="0.5" r="0.7" fill="#444"/><circle cx="-2.5" cy="2.5" r="0.7" fill="#555"/><circle cx="-0.5" cy="4.5" r="0.7" fill="#444"/><circle cx="2.5" cy="3" r="0.6" fill="#666"/><circle cx="-4.5" cy="0" r="0.6" fill="#555"/><path d="M-4 -4L4 4M-5 1L5 -1M0 -6L-1 6" stroke="#b8c4c4" stroke-width="0.5"/></g><g transform="translate(328.5 408)"><circle r="7" fill="#f2f6f6"/><circle r="7" fill="url(#dg)"/><circle cx="-3" cy="-3" r="0.8" fill="#333"/><circle cx="0.5" cy="-1" r="0.8" fill="#444"/><circle cx="3.5" cy="0.5" r="0.7" fill="#444"/><circle cx="-2.5" cy="2.5" r="0.7" fill="#555"/><circle cx="-0.5" cy="4.5" r="0.7" fill="#444"/><circle cx="2.5" cy="3" r="0.6" fill="#666"/><circle cx="-4.5" cy="0" r="0.6" fill="#555"/><path d="M-4 -4L4 4M-5 1L5 -1M0 -6L-1 6" stroke="#b8c4c4" stroke-width="0.5"/></g><g transform="translate(328.5 451)"><circle r="7" fill="#f2f6f6"/><circle r="7" fill="url(#dg)"/><circle cx="-3" cy="-3" r="0.8" fill="#333"/><circle cx="0.5" cy="-1" r="0.8" fill="#444"/><circle cx="3.5" cy="0.5" r="0.7" fill="#444"/><circle cx="-2.5" cy="2.5" r="0.7" fill="#555"/><circle cx="-0.5" cy="4.5" r="0.7" fill="#444"/><circle cx="2.5" cy="3" r="0.6" fill="#666"/><circle cx="-4.5" cy="0" r="0.6" fill="#555"/><path d="M-4 -4L4 4M-5 1L5 -1M0 -6L-1 6" stroke="#b8c4c4" stroke-width="0.5"/></g><g transform="translate(328.5 495)"><circle r="7" fill="#f2f6f6"/><circle r="7" fill="url(#dg)"/><circle cx="-3" cy="-3" r="0.8" fill="#333"/><circle cx="0.5" cy="-1" r="0.8" fill="#444"/><circle cx="3.5" cy="0.5" r="0.7" fill="#444"/><circle cx="-2.5" cy="2.5" r="0.7" fill="#555"/><circle cx="-0.5" cy="4.5" r="0.7" fill="#444"/><circle cx="2.5" cy="3" r="0.6" fill="#666"/><circle cx="-4.5" cy="0" r="0.6" fill="#555"/><path d="M-4 -4L4 4M-5 1L5 -1M0 -6L-1 6" stroke="#b8c4c4" stroke-width="0.5"/></g><g transform="translate(476 320.5)"><circle r="7" fill="#f2f6f6"/><circle r="7" fill="url(#dg)"/><circle cx="-3" cy="-3" r="0.8" fill="#333"/><circle cx="0.5" cy="-1" r="0.8" fill="#444"/><circle cx="3.5" cy="0.5" r="0.7" fill="#444"/><circle cx="-2.5" cy="2.5" r="0.7" fill="#555"/><circle cx="-0.5" cy="4.5" r="0.7" fill="#444"/><circle cx="2.5" cy="3" r="0.6" fill="#666"/><circle cx="-4.5" cy="0" r="0.6" fill="#555"/><path d="M-4 -4L4 4M-5 1L5 -1M0 -6L-1 6" stroke="#b8c4c4" stroke-width="0.5"/></g><g transform="translate(476 366)"><circle r="7" fill="#f2f6f6"/><circle r="7" fill="url(#dg)"/><circle cx="-3" cy="-3" r="0.8" fill="#333"/><circle cx="0.5" cy="-1" r="0.8" fill="#444"/><circle cx="3.5" cy="0.5" r="0.7" fill="#444"/><circle cx="-2.5" cy="2.5" r="0.7" fill="#555"/><circle cx="-0.5" cy="4.5" r="0.7" fill="#444"/><circle cx="2.5" cy="3" r="0.6" fill="#666"/><circle cx="-4.5" cy="0" r="0.6" fill="#555"/><path d="M-4 -4L4 4M-5 1L5 -1M0 -6L-1 6" stroke="#b8c4c4" stroke-width="0.5"/></g><g transform="translate(476 408)"><circle r="7" fill="#f2f6f6"/><circle r="7" fill="url(#dg)"/><circle cx="-3" cy="-3" r="0.8" fill="#333"/><circle cx="0.5" cy="-1" r="0.8" fill="#444"/><circle cx="3.5" cy="0.5" r="0.7" fill="#444"/><circle cx="-2.5" cy="2.5" r="0.7" fill="#555"/><circle cx="-0.5" cy="4.5" r="0.7" fill="#444"/><circle cx="2.5" cy="3" r="0.6" fill="#666"/><circle cx="-4.5" cy="0" r="0.6" fill="#555"/><path d="M-4 -4L4 4M-5 1L5 -1M0 -6L-1 6" stroke="#b8c4c4" stroke-width="0.5"/></g><g transform="translate(476 451)"><circle r="7" fill="#f2f6f6"/><circle r="7" fill="url(#dg)"/><circle cx="-3" cy="-3" r="0.8" fill="#333"/><circle cx="0.5" cy="-1" r="0.8" fill="#444"/><circle cx="3.5" cy="0.5" r="0.7" fill="#444"/><circle cx="-2.5" cy="2.5" r="0.7" fill="#555"/><circle cx="-0.5" cy="4.5" r="0.7" fill="#444"/><circle cx="2.5" cy="3" r="0.6" fill="#666"/><circle cx="-4.5" cy="0" r="0.6" fill="#555"/><path d="M-4 -4L4 4M-5 1L5 -1M0 -6L-1 6" stroke="#b8c4c4" stroke-width="0.5"/></g><g transform="translate(476 495)"><circle r="7" fill="#f2f6f6"/><circle r="7" fill="url(#dg)"/><circle cx="-3" cy="-3" r="0.8" fill="#333"/><circle cx="0.5" cy="-1" r="0.8" fill="#444"/><circle cx="3.5" cy="0.5" r="0.7" fill="#444"/><circle cx="-2.5" cy="2.5" r="0.7" fill="#555"/><circle cx="-0.5" cy="4.5" r="0.7" fill="#444"/><circle cx="2.5" cy="3" r="0.6" fill="#666"/><circle cx="-4.5" cy="0" r="0.6" fill="#555"/><path d="M-4 -4L4 4M-5 1L5 -1M0 -6L-1 6" stroke="#b8c4c4" stroke-width="0.5"/></g>
<text x="405" y="324" text-anchor="middle" font-family="Liberation Serif" font-size="29" fill="#f4f4f4" transform="translate(405 0) scale(0.6 1) translate(-405 0)">XII</text>
<text x="405.5" y="345" text-anchor="middle" font-family="Liberation Serif" font-size="12.3" fill="#f0f0f0" letter-spacing="-0.1">DIWANG DIAMOND</text>
<text x="406" y="472" text-anchor="middle" font-family="Liberation Serif" font-size="16.2" fill="#f0f0f0" letter-spacing="1.4">QUARTZ</text>
<text x="405" y="516.5" text-anchor="middle" font-family="Liberation Serif" font-size="29" fill="#f4f4f4" transform="translate(405 0) scale(0.68 1) translate(-405 0)">VI</text>
<path d="M397.8 405.5 L362.0 379.7 L356.2 379.3 L354.9 382.8 L394.0 410.8Z" fill="#cbcbcb"/><path d="M414.0 410.7 L464.0 373.4 L466.2 368.0 L463.2 365.8 L410.0 405.4Z" fill="#cbcbcb"/><circle cx="404" cy="408.4" r="8.3" fill="none" stroke="#cbcbcb" stroke-width="6.2"/><circle cx="404" cy="408.4" r="5.3" fill="#000"/>
<!-- crown selection -->
<rect x="543.5" y="396.5" width="18" height="34" fill="#4a6ae0" opacity="0.85"/>
<rect x="546" y="398.5" width="13" height="30" rx="5" fill="#d8dcec" stroke="#3a5ce0" stroke-width="1.2"/>
<path d="M547 402H558M547 405.5H558M547 409H558M547 412.5H558M547 416H558M547 419.5H558M547 423H558M547 426.5H558" stroke="#7a88c0" stroke-width="1.2"/>
<rect x="550" y="412" width="4" height="4" fill="#3a5ce0"/>
<g fill="#fff" stroke="#3a4a90" stroke-width="1.1">
<rect x="540.5" y="393" width="5" height="5"/><rect x="549.5" y="393" width="5" height="5"/><rect x="558.5" y="393" width="5" height="5"/>
<rect x="540.5" y="411.5" width="5" height="5"/><rect x="558.5" y="411.5" width="5" height="5"/>
<rect x="540.5" y="428" width="5" height="5"/><rect x="549.5" y="428" width="5" height="5"/><rect x="558.5" y="428" width="5" height="5"/>
</g>
</svg>
<!-- COLOR PANEL -->
<div class="a" style="left:891px;top:115px;width:312px;height:14px;background:#2e2e2e;border-radius:3px 3px 0 0"></div>
<svg class="a" style="left:918px;top:119px" width="9" height="7" viewBox="0 0 9 7"><path d="M0 0.5L4 3.5L0 6.5ZM4.5 0.5L8.5 3.5L4.5 6.5Z" fill="#d0d0d0"/></svg>
<svg class="a" style="left:957px;top:119px" width="9" height="7" viewBox="0 0 9 7"><path d="M0 0.5L4 3.5L0 6.5ZM4.5 0.5L8.5 3.5L4.5 6.5Z" fill="#d0d0d0"/></svg>
<svg class="a" style="left:1173px;top:119px" width="9" height="7" viewBox="0 0 9 7"><path d="M4 0.5L0 3.5L4 6.5ZM8.5 0.5L4.5 3.5L8.5 6.5Z" fill="#d0d0d0"/></svg>
<svg class="a" style="left:1190px;top:118px" width="8" height="8" viewBox="0 0 8 8"><path d="M1 1L7 7M7 1L1 7" stroke="#e0e0e0" stroke-width="1.6"/></svg>
<div class="a" style="left:891px;top:129px;width:80px;height:41px;background:#4b4b4b;border:1px solid #2e2e2e;border-top:none"></div>
<div class="a" style="left:931px;top:129px;width:1px;height:41px;background:#2e2e2e"></div>
<div class="a" style="left:900px;top:134px;width:17px;height:3px;background:repeating-linear-gradient(90deg,#151515 0 1px,transparent 1px 2px)"></div>
<div class="a" style="left:940px;top:134px;width:17px;height:3px;background:repeating-linear-gradient(90deg,#151515 0 1px,transparent 1px 2px)"></div>
<svg class="a" style="left:903px;top:144px" width="16" height="16" viewBox="0 0 16 16"><rect x="0" y="0" width="1.5" height="16" fill="#c8c8c8"/><rect x="2.5" y="2" width="7" height="5" fill="#bdbdbd"/><rect x="2.5" y="9" width="12" height="5" fill="#bdbdbd"/></svg>
<div class="a" style="left:942px;top:145px;width:18px;height:14px;background:linear-gradient(90deg,#2a2a2a,#e8e8e8);border:1px solid #aaa"></div>
<div class="a" style="left:971px;top:129px;width:232px;height:194px;background:#4e4e4e;border:1px solid #2e2e2e;border-top:none"></div>
<div class="a" style="left:972px;top:129px;width:230px;height:18px;background:#393939"></div>
<div class="a" style="left:972px;top:129px;width:44px;height:18px;background:#4e4e4e"></div>
<svg class="a" style="left:977px;top:133px" width="6" height="10" viewBox="0 0 6 10"><path d="M0.5 4L3 1L5.5 4M0.5 6L3 9L5.5 6" fill="none" stroke="#ddd" stroke-width="1.1"/></svg>
<div class="t" style="left:985px;top:132px;color:#e4e4e4;font-size:12px">颜色</div>
<svg class="a" style="left:1184px;top:134px" width="14" height="9" viewBox="0 0 14 9"><path d="M0 2.5h4.5l-2.25 2.5z" fill="#e0e0e0"/><path d="M5.5 0.5h8M5.5 3h8M5.5 5.5h8M5.5 8h8" stroke="#e0e0e0" stroke-width="1"/></svg>
<svg class="a" style="left:978px;top:153px" width="12" height="12" viewBox="0 0 12 12"><rect x="4.5" y="4.5" width="7" height="7" fill="#111" stroke="#eee"/><rect x="0.5" y="0.5" width="7" height="7" fill="#eee" stroke="#111"/></svg>
<svg class="a" style="left:995px;top:154px" width="12" height="12" viewBox="0 0 12 12"><path d="M2 3H8V7M2 3L4 1M2 3L4 5M8 9H4V5" fill="none" stroke="#6a6a6a" stroke-width="1"/></svg>
<div class="a" style="left:977px;top:171px;width:20px;height:22px;border:1px solid #2a2a2a;background:#4a4a4a"></div>
<svg class="a" style="left:983px;top:175px" width="8" height="8" viewBox="0 0 8 8"><path d="M1.5 3C1.5 0.5 6 0.5 6 2.5C6 4 4 4 4 6" fill="none" stroke="#ddd" stroke-width="1.1"/></svg>
<div class="a" style="left:987px;top:181px;width:20px;height:20px;background:#fff;border:1px solid #333"></div>
<div class="a" style="left:992px;top:186px;width:10px;height:10px;background:#4a4a4a;border:1px solid #111"></div>
<svg class="a" style="left:987px;top:181px" width="20" height="20" viewBox="0 0 20 20"><path d="M0 20L20 0" stroke="#c82030" stroke-width="1.6"/></svg>
<div class="t" style="left:1025px;top:160px;color:#f0f0f0;font-family:'Liberation Mono',monospace;font-size:11px;font-weight:bold;transform:scaleX(0.85)">C</div>
<div class="a" style="left:1042px;top:162px;width:103px;height:6px;background:#4a4a4a;border:1px solid #262626"></div>
<div class="a" style="left:1151px;top:156px;width:33px;height:18px;background:#a6a6a6;border:1px solid #3a3a3a"></div>
<div class="t" style="left:1187px;top:161px;color:#e8e8e8;font-family:'Liberation Mono',monospace;font-size:10px">%</div>
<div class="t" style="left:1025px;top:185px;color:#f0f0f0;font-family:'Liberation Mono',monospace;font-size:11px;font-weight:bold;transform:scaleX(0.85)">M</div>
<div class="a" style="left:1042px;top:187px;width:103px;height:6px;background:#4a4a4a;border:1px solid #262626"></div>
<div class="a" style="left:1151px;top:181px;width:33px;height:18px;background:#a6a6a6;border:1px solid #3a3a3a"></div>
<div class="t" style="left:1187px;top:186px;color:#e8e8e8;font-family:'Liberation Mono',monospace;font-size:10px">%</div>
<div class="t" style="left:1025px;top:210px;color:#f0f0f0;font-family:'Liberation Mono',monospace;font-size:11px;font-weight:bold;transform:scaleX(0.85)">Y</div>
<div class="a" style="left:1042px;top:212px;width:103px;height:6px;background:#4a4a4a;border:1px solid #262626"></div>
<div class="a" style="left:1151px;top:206px;width:33px;height:18px;background:#a6a6a6;border:1px solid #3a3a3a"></div>
<div class="t" style="left:1187px;top:211px;color:#e8e8e8;font-family:'Liberation Mono',monospace;font-size:10px">%</div>
<div class="t" style="left:1025px;top:235px;color:#f0f0f0;font-family:'Liberation Mono',monospace;font-size:11px;font-weight:bold;transform:scaleX(0.85)">K</div>
<div class="a" style="left:1042px;top:237px;width:103px;height:6px;background:#4a4a4a;border:1px solid #262626"></div>
<div class="a" style="left:1151px;top:231px;width:33px;height:18px;background:#a6a6a6;border:1px solid #3a3a3a"></div>
<div class="t" style="left:1187px;top:236px;color:#e8e8e8;font-family:'Liberation Mono',monospace;font-size:10px">%</div>
<svg class="a" style="left:982px;top:239px" width="12" height="11" viewBox="0 0 12 11"><path d="M6 0L11 5H8V8H11V10H4V5H1Z" fill="#d8d8d8"/></svg>
<div class="a" style="left:1001px;top:238px;width:14px;height:14px;background:#000;border:1px solid #e8e8e8"></div>
<div class="a" style="left:977px;top:261px;width:13px;height:13px;background:#fff"></div>
<svg class="a" style="left:977px;top:261px" width="13" height="13" viewBox="0 0 13 13"><path d="M0 13L13 0" stroke="#c82030" stroke-width="1.6"/></svg>
<div class="a" style="left:990px;top:261px;width:13px;height:13px;background:#050505"></div>
<div class="a" style="left:1003px;top:261px;width:13px;height:13px;background:#fff"></div>
<div class="a" style="left:978px;top:286px;width:206px;height:21px;background:linear-gradient(90deg,#ff2a2a 0%,#ffd000 16%,#fff200 20%,#3cc040 38%,#30b8d8 52%,#1a40c0 66%,#3020a0 74%,#a030a0 85%,#ff2070 100%)"></div>
<div class="a" style="left:978px;top:286px;width:206px;height:21px;background:linear-gradient(#ffffff 0%,rgba(255,255,255,0) 45%,rgba(0,0,0,0) 55%,#000 100%)"></div>
<div class="a" style="left:972px;top:314px;width:230px;height:1px;background:#2e2e2e"></div>
<div class="a" style="left:972px;top:315px;width:230px;height:7px;background:#444"></div>
<div class="a" style="left:1076px;top:317px;width:20px;height:3px;background:repeating-linear-gradient(90deg,#151515 0 1px,transparent 1px 2px)"></div>
<svg class="a" style="left:1190px;top:302px" width="9" height="9" viewBox="0 0 9 9"><path d="M8 1V8H1ZM8 4V8H4Z" fill="none" stroke="#777" stroke-width="0.8" stroke-dasharray="1 1"/></svg>
<!-- PATHFINDER PANEL -->
<div class="a" style="left:922px;top:361px;width:232px;height:135px;background:#4e4e4e;border:1px solid #2e2e2e;border-radius:3px 3px 0 0"></div>
<div class="a" style="left:922px;top:361px;width:232px;height:14px;background:#2e2e2e;border-radius:3px 3px 0 0"></div>
<svg class="a" style="left:1124px;top:365px" width="9" height="7" viewBox="0 0 9 7"><path d="M4 0.5L0 3.5L4 6.5ZM8.5 0.5L4.5 3.5L8.5 6.5Z" fill="#d0d0d0"/></svg>
<svg class="a" style="left:1141px;top:364px" width="8" height="8" viewBox="0 0 8 8"><path d="M1 1L7 7M7 1L1 7" stroke="#e0e0e0" stroke-width="1.6"/></svg>
<div class="a" style="left:923px;top:375px;width:230px;height:18px;background:#393939"></div>
<div class="a" style="left:923px;top:375px;width:75px;height:18px;background:#4e4e4e"></div>
<div class="t" style="left:930px;top:378px;color:#e4e4e4;font-size:12px">路径查找器</div>
<svg class="a" style="left:1135px;top:380px" width="14" height="9" viewBox="0 0 14 9"><path d="M0 2.5h4.5l-2.25 2.5z" fill="#e0e0e0"/><path d="M5.5 0.5h8M5.5 3h8M5.5 5.5h8M5.5 8h8" stroke="#e0e0e0" stroke-width="1"/></svg>
<div class="t" style="left:928px;top:399px;color:#e8e8e8;font-size:12px">形状模式:</div>
<div class="t" style="left:928px;top:447px;color:#e8e8e8;font-size:12px">路径查找器:</div>
<div class="a" style="left:1072px;top:419px;width:75px;height:19px;background:#545454;border:1px solid #393939"></div>
<div class="t" style="left:1097px;top:422px;color:#9a9a9a;font-size:12px">扩展</div>
<svg class="a" style="left:933px;top:420px" width="16" height="16" viewBox="0 0 16 16"><rect x="1.5" y="1.5" width="8" height="8" fill="#888" stroke="#a8a8a8"/><rect x="5.5" y="5.5" width="8" height="8" fill="#888" stroke="#a8a8a8"/><rect x="6" y="6" width="3" height="3" fill="#888"/></svg>
<svg class="a" style="left:967px;top:420px" width="16" height="16" viewBox="0 0 16 16"><rect x="5.5" y="5.5" width="8" height="8" fill="none" stroke="#6a6a6a"/><rect x="1.5" y="1.5" width="8" height="8" fill="#888" stroke="#a8a8a8"/><rect x="6" y="6" width="4" height="4" fill="#4e4e4e"/></svg>
<svg class="a" style="left:1003px;top:420px" width="16" height="16" viewBox="0 0 16 16"><rect x="1.5" y="1.5" width="8" height="8" fill="none" stroke="#a8a8a8"/><rect x="5.5" y="5.5" width="8" height="8" fill="none" stroke="#a8a8a8"/><rect x="6" y="6" width="3" height="3" fill="#888"/></svg>
<svg class="a" style="left:1039px;top:420px" width="16" height="16" viewBox="0 0 16 16"><rect x="1.5" y="1.5" width="8" height="8" fill="#888" stroke="#a8a8a8"/><rect x="5.5" y="5.5" width="8" height="8" fill="#888" stroke="#a8a8a8"/><rect x="5.5" y="5.5" width="4" height="4" fill="#4e4e4e" stroke="#a8a8a8"/></svg>
<svg class="a" style="left:936px;top:469px" width="16" height="16" viewBox="0 0 16 16"><path d="M1.5 9V1.5H9" fill="none" stroke="#a8a8a8"/><rect x="3.5" y="3.5" width="6" height="6" fill="none" stroke="#a8a8a8"/><rect x="5.5" y="5.5" width="3" height="3" fill="#888"/><path d="M7 14.5H14.5V7" fill="none" stroke="#a8a8a8"/></svg>
<svg class="a" style="left:973px;top:469px" width="16" height="16" viewBox="0 0 16 16"><rect x="1" y="1" width="5" height="5" fill="#bbb"/><rect x="3" y="5" width="5" height="3" fill="#bbb"/><path d="M9 8H15V15H6V11H9Z" fill="#aaa"/></svg>
<svg class="a" style="left:1010px;top:469px" width="16" height="16" viewBox="0 0 16 16"><rect x="1" y="1" width="9" height="8" fill="#bbb"/><path d="M10 6H15V15H6V9H10Z" fill="#aaa"/></svg>
<svg class="a" style="left:1047px;top:469px" width="16" height="16" viewBox="0 0 16 16"><rect x="1" y="1" width="9" height="9" fill="#3a3a3a"/><rect x="5" y="5" width="5" height="5" fill="#bbb"/><rect x="5" y="10" width="9" height="4" fill="#6a6a6a"/><rect x="10" y="5" width="4" height="5" fill="#6a6a6a"/></svg>
<svg class="a" style="left:1085px;top:469px" width="16" height="16" viewBox="0 0 16 16"><rect x="1.5" y="1.5" width="8" height="8" fill="none" stroke="#a8a8a8"/><rect x="5.5" y="5.5" width="9" height="9" fill="none" stroke="#a8a8a8"/><rect x="5.5" y="5.5" width="4" height="4" fill="none" stroke="#a8a8a8"/></svg>
<svg class="a" style="left:1123px;top:469px" width="16" height="16" viewBox="0 0 16 16"><rect x="1.5" y="1.5" width="8" height="8" fill="#3a3a3a" stroke="#333"/><path d="M10 5.5H14.5V14.5H5.5V10H10Z" fill="#888" stroke="#a8a8a8"/></svg>
<!-- DOCK -->
<div class="a" style="left:1242px;top:118px;width:38px;height:2px;background:#2e2e2e"></div>
<div class="a" style="left:1242px;top:215px;width:38px;height:2px;background:#2e2e2e"></div>
<div class="a" style="left:1242px;top:285px;width:38px;height:2px;background:#2e2e2e"></div>
<div class="a" style="left:1242px;top:352px;width:38px;height:2px;background:#2e2e2e"></div>
<div class="a" style="left:1242px;top:393px;width:38px;height:2px;background:#2e2e2e"></div>
<div class="a" style="left:1242px;top:436px;width:38px;height:2px;background:#2e2e2e"></div>
<div class="a" style="left:1242px;top:505px;width:38px;height:2px;background:#2e2e2e"></div>
<div class="a" style="left:1251px;top:82px;width:20px;height:3px;background:repeating-linear-gradient(90deg,#151515 0 1px,transparent 1px 2px)"></div>
<div class="a" style="left:1251px;top:123px;width:20px;height:3px;background:repeating-linear-gradient(90deg,#151515 0 1px,transparent 1px 2px)"></div>
<div class="a" style="left:1251px;top:220px;width:20px;height:3px;background:repeating-linear-gradient(90deg,#151515 0 1px,transparent 1px 2px)"></div>
<div class="a" style="left:1251px;top:290px;width:20px;height:3px;background:repeating-linear-gradient(90deg,#151515 0 1px,transparent 1px 2px)"></div>
<div class="a" style="left:1251px;top:357px;width:20px;height:3px;background:repeating-linear-gradient(90deg,#151515 0 1px,transparent 1px 2px)"></div>
<div class="a" style="left:1251px;top:399px;width:20px;height:3px;background:repeating-linear-gradient(90deg,#151515 0 1px,transparent 1px 2px)"></div>
<div class="a" style="left:1251px;top:440px;width:20px;height:3px;background:repeating-linear-gradient(90deg,#151515 0 1px,transparent 1px 2px)"></div>
<svg class="a" style="left:1251px;top:93px" width="20" height="20" viewBox="0 0 20 20"><defs><linearGradient id="dq" x1="0" y1="0" x2="1" y2="1"><stop offset="0" stop-color="#e0e0e0"/><stop offset="1" stop-color="#2a2a2a"/></linearGradient></defs><path d="M4 17V3A14 14 0 0 1 18 17Z" fill="url(#dq)" stroke="#c4c4c4" stroke-width="1.2"/><path d="M4 17L9 5M4 17L14 9M4 17L17 13" stroke="#777" stroke-width="0.6"/></svg>
<svg class="a" style="left:1251px;top:132px" width="20" height="20" viewBox="0 0 20 20"><rect x="2.5" y="4.5" width="15" height="11" fill="#c0c0c0" stroke="#ccc"/><rect x="4" y="6" width="3.5" height="3.5" fill="#222"/><rect x="8.3" y="6" width="3.5" height="3.5" fill="#555"/><rect x="12.6" y="6" width="3.5" height="3.5" fill="#888"/><rect x="4" y="10.5" width="3.5" height="3.5" fill="#777"/><rect x="8.3" y="10.5" width="3.5" height="3.5" fill="#666"/><rect x="12.6" y="10.5" width="3.5" height="3.5" fill="#444"/></svg>
<svg class="a" style="left:1251px;top:160px" width="20" height="20" viewBox="0 0 20 20"><rect x="6" y="10" width="8" height="8" fill="#c4c4c4"/><path d="M8 10V3M10 10L12 4M11 10L15 6" stroke="#c4c4c4" stroke-width="1.5"/><circle cx="8" cy="3" r="1.5" fill="#c4c4c4"/><circle cx="15" cy="6" r="2" fill="#c4c4c4"/></svg>
<svg class="a" style="left:1251px;top:188px" width="20" height="20" viewBox="0 0 20 20"><circle cx="10" cy="6" r="3.5" fill="#c4c4c4"/><circle cx="6" cy="11" r="3.5" fill="#c4c4c4"/><circle cx="14" cy="11" r="3.5" fill="#c4c4c4"/><path d="M10 9L8 17H12Z" fill="#c4c4c4"/></svg>
<svg class="a" style="left:1251px;top:229px" width="20" height="20" viewBox="0 0 20 20"><circle cx="10" cy="10" r="7.5" fill="none" stroke="#ccc" stroke-width="1.2" stroke-dasharray="2 1.5"/><circle cx="10" cy="10" r="5.5" fill="#a8a8a8"/></svg>
<svg class="a" style="left:1251px;top:257px" width="20" height="20" viewBox="0 0 20 20"><rect x="7.5" y="3.5" width="10" height="10" fill="none" stroke="#c4c4c4" stroke-width="1.1"/><rect x="2.5" y="9.5" width="6" height="6" fill="#888" stroke="#c4c4c4"/><rect x="5.5" y="12.5" width="6" height="6" fill="#666" stroke="#c4c4c4"/></svg>
<svg class="a" style="left:1251px;top:297px" width="20" height="20" viewBox="0 0 20 20"><path d="M10 3L18 8L10 13L2 8Z" fill="#c4c4c4"/><path d="M4 10.5L2 12L10 17L18 12L16 10.5L10 14.5Z" fill="#9a9a9a"/></svg>
<svg class="a" style="left:1251px;top:325px" width="20" height="20" viewBox="0 0 20 20"><rect x="3.5" y="2.5" width="10" height="11" fill="none" stroke="#c4c4c4" stroke-width="1.1"/><rect x="7.5" y="7.5" width="10" height="10" fill="#4a4a4a" stroke="#c4c4c4" stroke-width="1.1"/></svg>
<div class="t" style="left:1254px;top:369px;font-family:'Liberation Serif',serif;font-style:italic;font-size:20px;color:#b8b8b8">O</div>
<svg class="a" style="left:1251px;top:408px" width="20" height="20" viewBox="0 0 20 20"><rect x="4.5" y="4.5" width="11" height="11" fill="none" stroke="#c4c4c4" stroke-width="1"/><g fill="#c4c4c4"><rect x="3" y="3" width="3" height="3"/><rect x="8.5" y="3" width="3" height="3"/><rect x="14" y="3" width="3" height="3"/><rect x="3" y="8.5" width="3" height="3"/><rect x="14" y="8.5" width="3" height="3"/><rect x="3" y="14" width="3" height="3"/><rect x="8.5" y="14" width="3" height="3"/><rect x="14" y="14" width="3" height="3"/><rect x="9.5" y="9.5" width="1" height="1"/></g></svg>
<svg class="a" style="left:1251px;top:449px" width="20" height="20" viewBox="0 0 20 20"><circle cx="10" cy="10" r="5.5" fill="none" stroke="#c4c4c4" stroke-width="1.2"/><path d="M10 2V18M2 10H18M4.3 4.3L15.7 15.7M15.7 4.3L4.3 15.7" stroke="#c4c4c4" stroke-width="1.2"/><circle cx="10" cy="10" r="1.5" fill="#c4c4c4"/></svg>
<svg class="a" style="left:1251px;top:477px" width="20" height="20" viewBox="0 0 20 20"><circle cx="10" cy="10" r="8" fill="#b0b0b0"/><circle cx="10" cy="5.5" r="1.5" fill="#444"/><rect x="8.7" y="8" width="2.6" height="7" fill="#444"/></svg>
<div class="a" style="left:1223px;top:86px;width:17px;height:16px;background:#3a3a3a"></div>
<svg class="a" style="left:1227px;top:92px" width="10" height="7" viewBox="0 0 10 7"><path d="M5 0.5L9.5 6.5H0.5Z" fill="#e8e8e8"/></svg>
<div class="a" style="left:1223px;top:365px;width:1px;height:16px;background:#262626"></div><div class="a" style="left:1224px;top:366px;width:15px;height:15px;background:#a0a0a0"></div>
<div class="a" style="left:1223px;top:656px;width:17px;height:17px;background:#3c3c3c"></div>
<svg class="a" style="left:1227px;top:661px" width="10" height="7" viewBox="0 0 10 7"><path d="M0.5 0.5H9.5L5 6.5Z" fill="#e8e8e8"/></svg>
<div class="a" style="left:1223px;top:673px;width:17px;height:17px;background:#414141"></div>
<div class="a" style="left:1239px;top:65px;width:3px;height:625px;background:#2a2a2a"></div>
<div class="a" style="left:74px;top:673px;width:422px;height:17px;background:#3b3b3b"></div>
<div class="a" style="left:74px;top:673px;width:1149px;height:1px;background:#202020"></div>
<div class="a" style="left:78px;top:675px;width:42px;height:14px;background:#a9a9a9"></div>
<div class="t" style="left:80px;top:677px;color:#111;font-family:'Liberation Mono',monospace;font-size:11px;letter-spacing:-0.5px">200%</div>
<div class="a" style="left:121px;top:675px;width:14px;height:14px;background:#5a5a5a"></div>
<svg class="a" style="left:124px;top:680px" width="8" height="5" viewBox="0 0 8 5"><path d="M0 0H8L4 5Z" fill="#eee"/></svg>
<svg class="a" style="left:144px;top:677px" width="12" height="9" viewBox="0 0 12 9"><rect x="0" y="0" width="2" height="9" fill="#555"/><path d="M9 0V9L3 4.5Z" fill="#555"/></svg>
<svg class="a" style="left:161px;top:677px" width="7" height="9" viewBox="0 0 7 9"><path d="M6 0V9L0 4.5Z" fill="#555"/></svg>
<div class="a" style="left:177px;top:675px;width:42px;height:14px;background:#a9a9a9"></div>
<div class="t" style="left:181px;top:677px;color:#111;font-family:'Liberation Mono',monospace;font-size:11px">1</div>
<div class="a" style="left:220px;top:675px;width:14px;height:14px;background:#5a5a5a"></div>
<svg class="a" style="left:223px;top:680px" width="8" height="5" viewBox="0 0 8 5"><path d="M0 0H8L4 5Z" fill="#eee"/></svg>
<svg class="a" style="left:243px;top:677px" width="7" height="9" viewBox="0 0 7 9"><path d="M0 0V9L6 4.5Z" fill="#555"/></svg>
<svg class="a" style="left:259px;top:677px" width="12" height="9" viewBox="0 0 12 9"><path d="M0 0V9L6 4.5Z" fill="#555"/><rect x="7" y="0" width="2" height="9" fill="#555"/></svg>
<div class="a" style="left:276px;top:674px;width:1px;height:16px;background:#2a2a2a"></div>
<div class="t" style="left:366px;top:677px;color:#e8e8e8;font-size:12px">选择</div>
<div class="a" style="left:478px;top:674px;width:18px;height:16px;background:#363636"></div>
<svg class="a" style="left:485px;top:678px" width="6" height="9" viewBox="0 0 6 9"><path d="M0 0L6 4.5L0 9Z" fill="#d8d8d8"/></svg>
<svg class="a" style="left:501px;top:678px" width="6" height="9" viewBox="0 0 6 9"><path d="M6 0L0 4.5L6 9Z" fill="#d8d8d8"/></svg>
<div class="a" style="left:1006px;top:674px;width:15px;height:15px;background:#9c9c9c"></div>
<svg class="a" style="left:1211px;top:678px" width="6" height="9" viewBox="0 0 6 9"><path d="M0 0L6 4.5L0 9Z" fill="#d8d8d8"/></svg>
<!-- TASKBAR -->
<div class="a" style="left:0;top:689px;width:1280px;height:1px;background:#1a1a1a"></div>
<div class="a" style="left:0;top:690px;width:1280px;height:30px;background:linear-gradient(#b9c6d4 0,#b9c6d4 1px,#91a2b6 1px,#8798ae 100%)"></div>
<svg class="a" style="left:9px;top:689px" width="36" height="31" viewBox="0 0 36 31"><defs><linearGradient id="orb" x1="0" y1="0" x2="0" y2="1"><stop offset="0" stop-color="#b8d0e0"/><stop offset="0.4" stop-color="#5a90c0"/><stop offset="0.55" stop-color="#0a3a88"/><stop offset="0.85" stop-color="#1878c8"/><stop offset="1" stop-color="#40c8f8"/></linearGradient></defs><circle cx="18" cy="16.5" r="17" fill="url(#orb)" stroke="#3a5a88" stroke-width="0.8"/>
<path d="M10 6Q14 3 18 6L17 13Q13 10 9 13Z" fill="#f06030"/><path d="M19 6Q23 9 27 6L26 13Q22 16 18 13Z" fill="#80c040"/><path d="M9 14Q13 11 17 14L16 21Q12 18 8 21Z" fill="#40a8e8"/><path d="M18 14Q22 17 26 14L25 21Q21 24 17 21Z" fill="#f8c830"/>
</svg>
<div class="a" style="left:72px;top:696px;width:17px;height:16px;background:#3a9ae0;border-radius:2px;border-bottom:2px solid #d8ecf8"></div>
<svg class="a" style="left:73px;top:698px" width="15" height="11" viewBox="0 0 15 11"><path d="M3.5 9A2.5 2.5 0 0 1 3.5 4A3.5 3.5 0 0 1 10 3A3 3 0 0 1 11.5 9Z" fill="none" stroke="#fff" stroke-width="1.5"/></svg>
<svg class="a" style="left:117px;top:697px" width="16" height="16" viewBox="0 0 16 16"><circle cx="8" cy="8" r="7.2" fill="#1a98d8" stroke="#e8f4fa" stroke-width="1.4"/><path d="M5.5 4V12M5.5 8.5L10 4M6.5 7.5L10.5 12" stroke="#fff" stroke-width="2"/></svg>
<div class="a" style="left:162px;top:696px;width:16px;height:16px;background:#0c1c62;border:1px solid #8aa0d8"></div>
<div class="t" style="left:164px;top:700px;color:#8ac8f8;font-size:9px;font-weight:bold">Ps</div>
<div class="a" style="left:195px;top:690px;width:140px;height:29px;background:linear-gradient(#e4eaf0,#d0d8e0 45%,#c2ccd6 55%,#c8d1db);border:1px solid #5a6a7e;border-radius:3px;box-shadow:inset 0 0 0 1px rgba(255,255,255,0.35)"></div>
<div class="a" style="left:204px;top:697px;width:15px;height:14px;background:#4a2a08;box-shadow:0 1px 2px rgba(0,0,0,0.4)"></div>
<div class="t" style="left:206px;top:700px;color:#f0c080;font-size:10px;font-weight:bold;letter-spacing:-0.5px">Ai</div>
<div class="t" style="left:223px;top:699px;color:#fff;font-size:12.4px;text-shadow:0 0 2px rgba(0,0,0,0.45)">课件.ai* @ 200%...</div>
<div class="a" style="left:352px;top:696px;width:12px;height:16px;background:linear-gradient(#e0eef8,#a8c8e0);border:1px solid #5a7a98"></div>
<div class="a" style="left:354px;top:698px;width:8px;height:3px;background:#c8a060"></div>
<div class="a" style="left:354px;top:703px;width:8px;height:7px;background:repeating-linear-gradient(90deg,#6a8aa8 0 1px,transparent 1px 2px)"></div>
<div class="a" style="left:394px;top:696px;width:16px;height:16px;background:#1a3a98;border-radius:1px"></div>
<div class="a" style="left:399px;top:699px;width:9px;height:2px;background:#e8f0ff;box-shadow:0 4px 0 #e8f0ff,0 8px 0 #e8f0ff"></div>
<div class="a" style="left:396px;top:699px;width:2px;height:2px;background:#e8f0ff;box-shadow:0 4px 0 #e8f0ff,0 8px 0 #e8f0ff"></div>
<div class="a" style="left:426px;top:691px;width:138px;height:28px;background:linear-gradient(#bcc7d4,#aab8c8 45%,#9badc0 55%,#a0afc2);border:1px solid #56687e;border-radius:3px;box-shadow:inset 0 0 0 1px rgba(255,255,255,0.35)"></div>
<svg class="a" style="left:433px;top:696px" width="17" height="17" viewBox="0 0 17 17"><circle cx="8.5" cy="8.5" r="6.5" fill="none" stroke="#2a9ae8" stroke-width="3"/><path d="M9 14Q12 10 16 13Q16 16 12 16Z" fill="#fff"/></svg>
<div class="t" style="left:453px;top:699px;color:#fff;font-size:12.4px;text-shadow:0 0 2px rgba(0,0,0,0.45)">5-11、绘制手表...</div>
<svg class="a" style="left:580px;top:696px" width="17" height="17" viewBox="0 0 17 17"><rect x="0" y="0" width="17" height="17" rx="2" fill="#f4f8fc"/><path d="M2 3L9 9L15 2L12 14L9 11L5 15Z" fill="#1a7ad8"/></svg>
<div class="a" style="left:624px;top:696px;width:16px;height:16px;background:#0c1c62;border:1px solid #8aa0d8"></div>
<div class="t" style="left:626px;top:700px;color:#8ac8f8;font-size:9px;font-weight:bold">Ps</div>
<svg class="a" style="left:668px;top:696px" width="17" height="17" viewBox="0 0 17 17"><rect x="0" y="0" width="17" height="17" rx="3" fill="#2a8ad8"/><circle cx="8.5" cy="6" r="2.5" fill="#fff"/><path d="M3 5Q8.5 14 14 5L12 12Q8.5 15 5 12Z" fill="#fff"/></svg>
<div class="a" style="left:700px;top:691px;width:138px;height:28px;background:linear-gradient(#bcc7d4,#aab8c8 45%,#9badc0 55%,#a0afc2);border:1px solid #56687e;border-radius:3px;box-shadow:inset 0 0 0 1px rgba(255,255,255,0.35)"></div>
<div class="a" style="left:708px;top:696px;width:16px;height:16px;background:linear-gradient(#c81010,#800808)"></div>
<div class="a" style="left:710px;top:702px;width:12px;height:3px;background:#f0e0c0"></div>
<div class="t" style="left:727px;top:699px;color:#fff;font-size:12.4px;text-shadow:0 0 2px rgba(0,0,0,0.45)">棕榈树下等3个会...</div>
<div class="a" style="left:842px;top:691px;width:138px;height:28px;background:linear-gradient(#bcc7d4,#aab8c8 45%,#9badc0 55%,#a0afc2);border:1px solid #56687e;border-radius:3px;box-shadow:inset 0 0 0 1px rgba(255,255,255,0.35)"></div>
<div class="a" style="left:851px;top:696px;width:13px;height:16px;background:linear-gradient(90deg,#c8a020,#f8e070 50%,#d8b030);border-radius:1px"></div>
<div class="t" style="left:870px;top:699px;color:#fff;font-size:12.4px;text-shadow:0 0 2px rgba(0,0,0,0.45)">截图</div>
<div class="t" style="left:994px;top:698px;color:#f4f4f4;font-family:'Liberation Mono',monospace;font-size:12px">CH</div>
<div class="a" style="left:1016px;top:698px;width:15px;height:10px;background:#e8e8e8;border:1px solid #888;border-radius:2px"></div>
<div class="a" style="left:1018px;top:700px;width:11px;height:4px;background:repeating-linear-gradient(90deg,#888 0 1px,transparent 1px 2px)"></div>
<svg class="a" style="left:1042px;top:697px" width="17" height="16" viewBox="0 0 17 16"><ellipse cx="8.5" cy="7.5" rx="8" ry="7" fill="#4ab830"/><path d="M3 13L2 16L6 14Z" fill="#4ab830"/><ellipse cx="8.5" cy="6" rx="6" ry="4" fill="#70d050" opacity="0.6"/></svg>
<svg class="a" style="left:1066px;top:696px" width="17" height="18" viewBox="0 0 17 18"><ellipse cx="8" cy="6" rx="5" ry="5.5" fill="#222"/><ellipse cx="8" cy="8" rx="3.5" ry="3" fill="#fff"/><path d="M3 11Q8 18 13 11L14 16H2Z" fill="#d03070"/><path d="M5 4Q8 2 11 4" stroke="#e04040" stroke-width="1.5" fill="none"/><circle cx="12.5" cy="13" r="4" fill="#f0a020"/><path d="M10 12H15M10 14H15" stroke="#fff" stroke-width="1"/></svg>
<svg class="a" style="left:1092px;top:697px" width="16" height="16" viewBox="0 0 16 16"><path d="M2 6H5L9 2V14L5 10H2Z" fill="#f0f0f0" stroke="#777" stroke-width="0.6"/><path d="M11 5Q13 8 11 11" stroke="#f0f0f0" stroke-width="1.2" fill="none"/></svg>
<svg class="a" style="left:1114px;top:696px" width="18" height="18" viewBox="0 0 18 18"><circle cx="9" cy="9" r="8" fill="#e8d820" stroke="#6a8a20" stroke-width="1"/><path d="M9 4V14M4 9H14" stroke="#2a7a10" stroke-width="3"/></svg>
<svg class="a" style="left:1138px;top:696px" width="18" height="18" viewBox="0 0 18 18"><rect x="6" y="6" width="11" height="8" fill="#888" stroke="#fff" stroke-width="1.2"/><path d="M9 16H15" stroke="#fff" stroke-width="1.5"/><path d="M3 1V10M1 1V5H5V1" stroke="#fff" stroke-width="1.3" fill="none"/></svg>
<svg class="a" style="left:1162px;top:696px" width="18" height="18" viewBox="0 0 18 18"><path d="M2 1V17" stroke="#fff" stroke-width="1.5"/><path d="M3 2H10L12 4H16V10H10L8 8H3Z" fill="#f4f4f4"/><circle cx="12" cy="13" r="4.5" fill="#e02020" stroke="#fff" stroke-width="0.8"/><path d="M10 11L14 15M14 11L10 15" stroke="#fff" stroke-width="1.3"/></svg>
<svg class="a" style="left:1186px;top:696px" width="18" height="18" viewBox="0 0 18 18"><rect x="0" y="1" width="16" height="9" fill="#108a90" stroke="#50c0c8" stroke-width="0.6"/><path d="M2 4H14M2 7H14" stroke="#80e0e8" stroke-width="1" stroke-dasharray="1 1"/><ellipse cx="12" cy="13" rx="3.5" ry="5" fill="#e8e8e8" stroke="#555" stroke-width="0.8"/></svg>
<div class="t" style="left:1222px;top:699px;color:#fff;font-size:12px">10:18</div>
<div class="a" style="left:1265px;top:691px;width:15px;height:29px;background:linear-gradient(90deg,#a8b6c8,#8898ae);border:1px solid #5a6a80;border-right:none;border-radius:2px 0 0 2px;box-shadow:inset 1px 1px 0 rgba(255,255,255,0.5)"></div>
<!-- END -->
</body></html>
